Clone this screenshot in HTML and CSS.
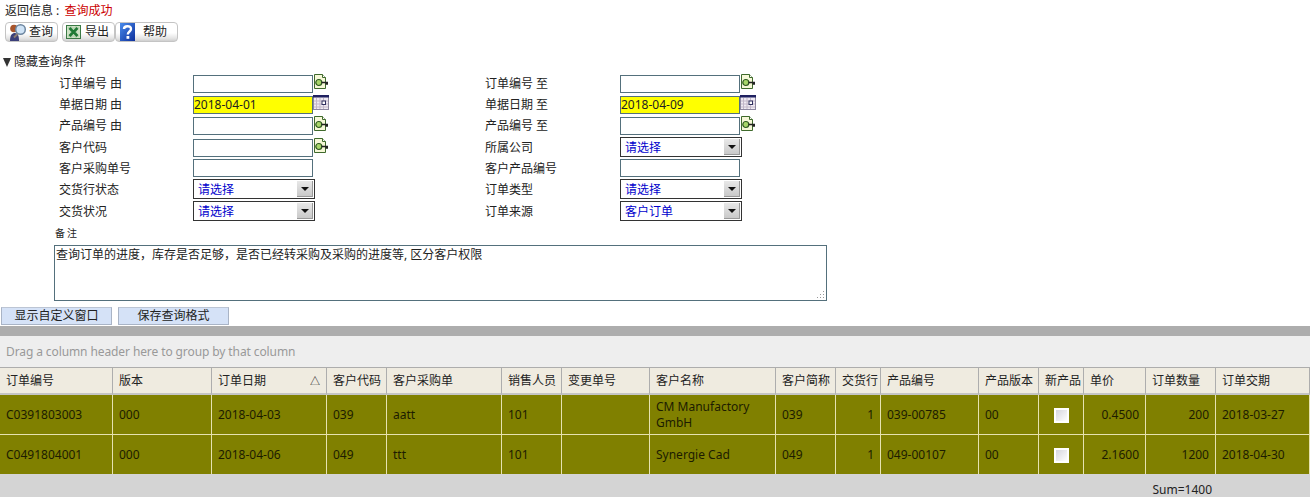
FILE: index.html
```html
<!DOCTYPE html>
<html lang="zh-CN">
<head>
<meta charset="utf-8">
<title>订单查询</title>
<link rel="stylesheet" href="styles.css">
</head>
<body>
<svg class="defs" width="0" height="0" aria-hidden="true">
  <symbol id="doc" viewBox="0 0 15 16">
    <path d="M1.5 .5H9.5L12.5 3.5V14.5H1.5Z" fill="#f6f8d8" stroke="#3f6a2c"/>
    <path d="M9.5 .5V3.5H12.5" fill="#fff" stroke="#3f6a2c"/>
    <circle cx="5.8" cy="8.5" r="3" fill="#a8d66a" stroke="#2f5a20" stroke-width="1.2"/>
    <path d="M8.5 8.5H14.5V10H12.5" fill="none" stroke="#222" stroke-width="1.5"/>
  </symbol>
  <symbol id="cal" viewBox="0 0 16 15">
    <rect x=".5" y=".5" width="15" height="14" fill="#efeaf2" stroke="#8d87a0"/>
    <rect x="0" y="0" width="16" height="2.5" fill="#1f2060"/>
    <path d="M3.5 3V14M7 3V14M10.5 3V14M1 6H15M1 9H15M1 12H15" stroke="#c2b7c8"/>
    <rect x="9" y="6" width="3.5" height="3.5" fill="#fff" stroke="#30305f"/>
  </symbol>
</svg>

<div class="msg">返回信息 : <span class="ok">查询成功</span></div>

<div class="toolbar">
  <button class="tbtn q" type="button">
    <svg width="20" height="18" viewBox="0 0 20 18">
      <circle cx="5" cy="5.500" r="3.800" fill="#a8552c"/>
      <path d="M1 18C1 12 3 10 6 10C9 10 10 13 10 18Z" fill="#3b3f7a"/>
      <circle cx="11.500" cy="6.500" r="4.800" fill="#cfe3f6" stroke="#6d86a0" stroke-width="1.500"/>
      <path d="M8.500 11L5 14.500" stroke="#8a7a70" stroke-width="2"/>
    </svg>查询</button>
  <button class="tbtn e" type="button">
    <svg width="15" height="14" viewBox="0 0 15 14">
      <rect x=".5" y=".5" width="14" height="13" fill="#cfe3c6" stroke="#3b7a45"/>
      <path d="M2 3H13M2 11H13M5 1V13M10 1V13" stroke="#9cc09c" stroke-width=".8"/>
      <path d="M3.500 3L11.500 11M11.500 3L3.500 11" stroke="#1f7a35" stroke-width="2.600"/>
    </svg>导出</button>
  <button class="tbtn h" type="button">
    <svg width="15" height="18" viewBox="0 0 15 18">
      <defs><linearGradient id="hg" x1="0" y1="0" x2="1" y2="1"><stop offset="0" stop-color="#4a8cec"/><stop offset="1" stop-color="#0d2f9c"/></linearGradient></defs>
      <rect width="15" height="18" fill="url(#hg)"/>
      <path d="M4 6C4 2.500 11 2 11 6C11 8.500 7.800 8.500 7.800 11.500" fill="none" stroke="#fff" stroke-width="2.400"/>
      <rect x="6.500" y="13" width="2.800" height="2.800" fill="#fff"/>
    </svg>帮助</button>
</div>

<div class="toggle"><span class="tri"></span>隐藏查询条件</div>

<div class="form">
  <label>订单编号 由</label>
  <div class="field"><input class="txt" type="text"><svg class="ico"><use href="#doc"/></svg></div>
  <label>订单编号 至</label>
  <div class="field"><input class="txt" type="text"><svg class="ico"><use href="#doc"/></svg></div>

  <label>单据日期 由</label>
  <div class="field"><input class="txt req" type="text" value="2018-04-01"><svg class="ico cal"><use href="#cal"/></svg></div>
  <label>单据日期 至</label>
  <div class="field"><input class="txt req" type="text" value="2018-04-09"><svg class="ico cal"><use href="#cal"/></svg></div>

  <label>产品编号 由</label>
  <div class="field"><input class="txt" type="text"><svg class="ico"><use href="#doc"/></svg></div>
  <label>产品编号 至</label>
  <div class="field"><input class="txt" type="text"><svg class="ico"><use href="#doc"/></svg></div>

  <label class="lower">客户代码</label>
  <div class="field low"><input class="txt" type="text"><svg class="ico"><use href="#doc"/></svg></div>
  <label class="lower">所属公司</label>
  <div class="field"><div class="sel up"><span>请选择</span><i class="arrow"></i></div></div>

  <label class="lower">客户采购单号</label>
  <div class="field"><input class="txt" type="text"></div>
  <label class="lower">客户产品编号</label>
  <div class="field"><input class="txt" type="text"></div>

  <label class="lower">交货行状态</label>
  <div class="field"><div class="sel up"><span>请选择</span><i class="arrow"></i></div></div>
  <label class="lower">订单类型</label>
  <div class="field"><div class="sel up"><span>请选择</span><i class="arrow"></i></div></div>

  <label class="lowest">交货状况</label>
  <div class="field"><div class="sel"><span>请选择</span><i class="arrow"></i></div></div>
  <label class="lowest">订单来源</label>
  <div class="field"><div class="sel"><span>客户订单</span><i class="arrow"></i></div></div>
</div>

<div class="remark">
  <div class="rlabel">备注</div>
  <textarea class="rtext" readonly>查询订单的进度，库存是否足够，是否已经转采购及采购的进度等, 区分客户权限</textarea>
  <svg class="grip" width="9" height="9" viewBox="0 0 9 9"><path d="M7 1h1v1H7zM4 4h1v1H4zM7 4h1v1H7zM1 7h1v1H1zM4 7h1v1H4zM7 7h1v1H7z" fill="#999"/></svg>
</div>

<div class="actions">
  <button class="abtn" type="button">显示自定义窗口</button>
  <button class="abtn" type="button">保存查询格式</button>
</div>

<div class="band"></div>
<div class="group">Drag a column header here to group by that column</div>

<table class="grid">
  <colgroup><col><col><col><col><col><col><col><col><col><col><col><col><col><col><col><col></colgroup>
  <thead>
    <tr>
      <th>订单编号</th><th>版本</th><th class="sort">订单日期</th><th>客户代码</th><th>客户采购单</th><th>销售人员</th><th>变更单号</th><th>客户名称</th><th>客户简称</th><th>交货行</th><th>产品编号</th><th>产品版本</th><th>新产品</th><th>单价</th><th>订单数量</th><th>订单交期</th>
    </tr>
  </thead>
  <tbody>
    <tr>
      <td>C0391803003</td><td>000</td><td>2018-04-03</td><td>039</td><td>aatt</td><td>101</td><td></td><td>CM Manufactory GmbH</td><td>039</td><td class="num">1</td><td>039-00785</td><td>00</td><td class="chk"><span class="box"></span></td><td class="num">0.4500</td><td class="num">200</td><td>2018-03-27</td>
    </tr>
    <tr>
      <td>C0491804001</td><td>000</td><td>2018-04-06</td><td>049</td><td>ttt</td><td>101</td><td></td><td>Synergie Cad</td><td>049</td><td class="num">1</td><td>049-00107</td><td>00</td><td class="chk"><span class="box"></span></td><td class="num">2.1600</td><td class="num">1200</td><td>2018-04-30</td>
    </tr>
  </tbody>
  <tfoot>
    <tr>
      <td colspan="14"></td><td class="sum">Sum=1400</td><td></td>
    </tr>
  </tfoot>
</table>
</body>
</html>
```

FILE: styles.css
```css
* { box-sizing: border-box; }
html, body { margin: 0; height: 497px; overflow: hidden; }
body {
  background: #fff;
  color: #222;
  font: 12px/18px "Noto Sans", "Noto Sans CJK SC", sans-serif;
}
.defs { position: absolute; }

.msg { height: 22px; padding: 2px 0 0 5px; line-height: 18px; }
.ok { margin-left: 2px; color: #c00; }

.toolbar { display: flex; height: 20px; padding-left: 5px; }
.tbtn {
  display: flex;
  align-items: center;
  height: 20px;
  padding: 0;
  border: 1px solid #c4c4c4;
  border-radius: 4px;
  background: linear-gradient(#fff 0, #fff 55%, #e4e4e4 85%, #cfcfcf 100%);
  color: #222;
  font: inherit;
}
.tbtn svg { flex: none; }
.q { width: 53px; padding-left: 3px; gap: 0; }
.e { width: 53px; margin-left: 4px; padding-left: 3px; gap: 4px; }
.h { width: 63px; padding-left: 4px; gap: 8px; }

.toggle { display: flex; align-items: center; height: 18px; margin-top: 11px; padding-left: 3px; }
.tri {
  width: 0;
  height: 0;
  margin-right: 3px;
  border-left: 4.5px solid transparent;
  border-right: 4.5px solid transparent;
  border-top: 9px solid #333;
}

.form {
  display: grid;
  grid-template-columns: 134px 292px 135px 1fr;
  grid-auto-rows: 20px;
  row-gap: 1px;
  margin-top: 4px;
  padding-left: 59px;
}
.form label { line-height: 18px; }
.form .lower { padding-top: 1px; }
.form .lowest { padding-top: 2px; }
.field { display: flex; align-items: flex-start; }
.low { margin-top: 1px; }
.txt {
  width: 120px;
  height: 18px;
  padding: 1px 0;
  border: 1px solid #54707c;
  border-radius: 0;
  outline: none;
  background: #fff;
  color: #222;
  font: inherit;
}
.req { background: #ff0; }
.ico { flex: none; width: 15px; height: 16px; margin: -1px 0 0; }
.cal { width: 16px; height: 15px; }
.sel {
  display: flex;
  justify-content: space-between;
  width: 122px;
  height: 20px;
  padding: 0 1px 0 4px;
  border: 1px solid #333;
  color: #00c;
  line-height: 20px;
}
.up { margin-top: -1px; }
.arrow {
  display: flex;
  align-items: center;
  justify-content: center;
  width: 16px;
  height: 16px;
  margin-top: 1px;
  border-right: 1px solid #999;
  border-bottom: 1px solid #999;
  background: linear-gradient(#e8e8e8, #c9c9c9);
}
.arrow::before {
  content: "";
  border-left: 4px solid transparent;
  border-right: 4px solid transparent;
  border-top: 4px solid #111;
}

.remark { position: relative; margin: 7px 0 0 54px; width: 773px; }
.rlabel { height: 17px; padding-left: 1px; font-size: 10px; letter-spacing: 2px; line-height: 11px; }
.rtext {
  display: block;
  width: 773px;
  height: 56px;
  padding: 0 1px;
  border: 1px solid #54707c;
  border-radius: 0;
  outline: none;
  color: #222;
  font: inherit;
  resize: none;
}
.grip { position: absolute; right: 2px; bottom: 2px; }

.actions { display: flex; gap: 6px; height: 19px; margin-top: 6px; padding-left: 1px; }
.abtn {
  width: 111px;
  height: 18px;
  padding: 0;
  border: 1px solid #a9b4c6;
  border-top-color: #bcc5d4;
  border-radius: 0;
  background: #d5e2f7;
  color: #222;
  font: inherit;
  line-height: 16px;
}

.band { height: 10px; background: #adadad; }
.group {
  height: 31px;
  padding-left: 6px;
  background: #eee;
  color: #999;
  line-height: 31px;
  letter-spacing: -.1px;
}

.grid { width: 1310px; border-collapse: separate; border-spacing: 0; table-layout: fixed; }
.grid col:nth-child(1) { width: 113px; }
.grid col:nth-child(2) { width: 99px; }
.grid col:nth-child(3) { width: 115px; }
.grid col:nth-child(4) { width: 60px; }
.grid col:nth-child(5) { width: 115px; }
.grid col:nth-child(6) { width: 60px; }
.grid col:nth-child(7) { width: 88px; }
.grid col:nth-child(8) { width: 126px; }
.grid col:nth-child(9) { width: 60px; }
.grid col:nth-child(10) { width: 45px; }
.grid col:nth-child(11) { width: 98px; }
.grid col:nth-child(12) { width: 60px; }
.grid col:nth-child(13) { width: 45px; }
.grid col:nth-child(14) { width: 62px; }
.grid col:nth-child(15) { width: 70px; }
.grid col:nth-child(16) { width: 94px; }
.grid th {
  height: 28px;
  padding: 0 0 0 6px;
  border-top: 1px solid #adadad;
  border-right: 1px solid #adadad;
  border-bottom: 2px solid #c4c4c4;
  background: #efebe0;
  font-weight: 400;
  text-align: left;
  white-space: nowrap;
  overflow: hidden;
}
.sort::after { content: "△"; float: right; margin-right: 6px; font-size: 10px; }
.grid tbody td {
  height: 40px;
  padding: 0 6px;
  border-right: 1px solid #e6e2b0;
  border-bottom: 1px solid #e6e2b0;
  background: #808000;
  color: #1c1c00;
  line-height: 16px;
}
.grid tbody tr:last-child td { border-bottom: 0; height: 39px; }
.num { text-align: right; }
.chk { text-align: center; }
.box {
  display: inline-block;
  width: 15px;
  height: 15px;
  border: 2px solid #fff;
  background: linear-gradient(135deg, #d6d6de, #fff);
  vertical-align: middle;
}
.grid tfoot td { height: 23px; background: #d4d4d4; }
.grid tfoot .sum { padding: 8px 4px 0 0; text-align: right; line-height: 16px; overflow: visible; white-space: nowrap; }
```
